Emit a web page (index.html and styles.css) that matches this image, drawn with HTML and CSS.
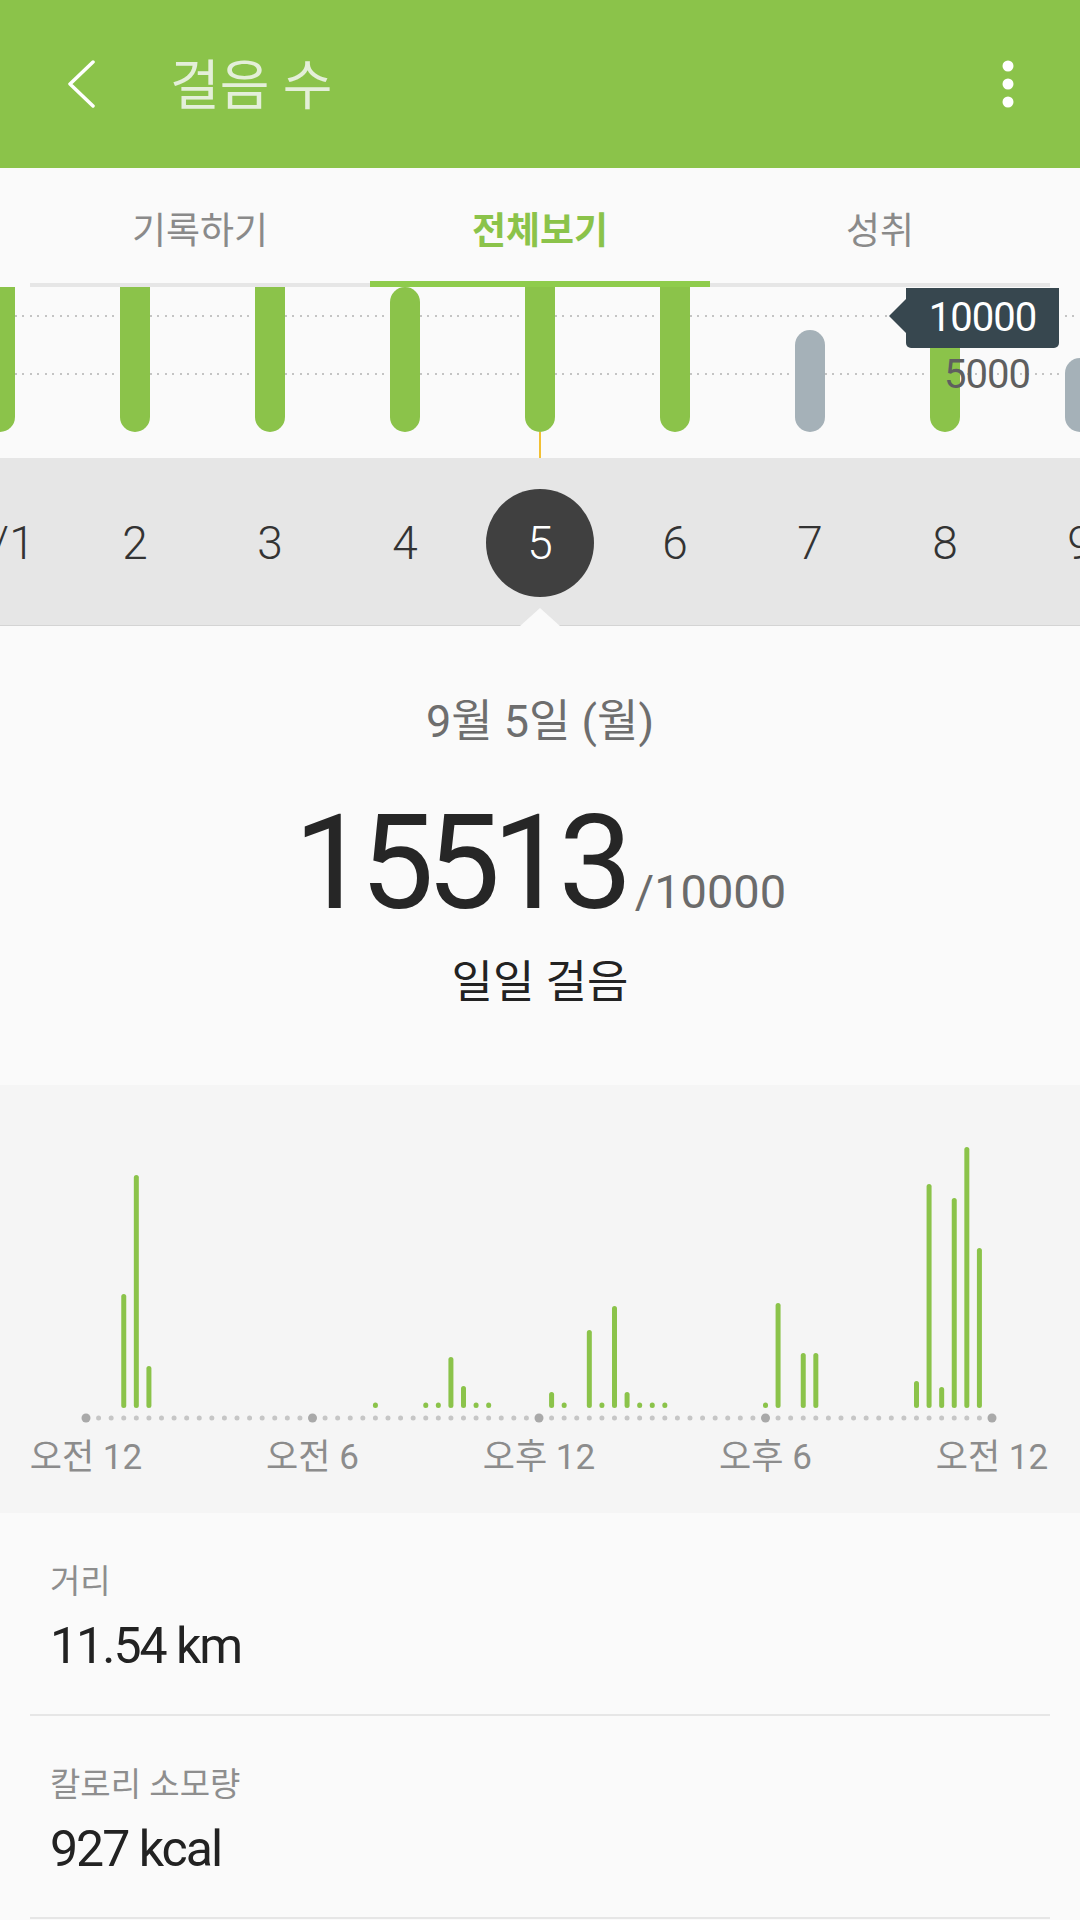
FILE: index.html
```html
<!DOCTYPE html>
<html lang="ko">
<head>
    <meta charset="UTF-8">
    <meta name="viewport" content="width=device-width, initial-scale=1.0">
    <title>걸음 수</title>
    <link rel="stylesheet" href="styles.css">
</head>
<body>
    <div class="screen">
        <header class="app-bar">
            <svg class="back-icon" viewBox="0 0 28 48">
                <polyline points="26,2 3,24 26,46" fill="none" stroke="#fff" stroke-width="3.5" stroke-linecap="round" stroke-linejoin="round"/>
            </svg>
            <h1 class="app-title">걸음 수</h1>
            <svg class="menu-icon" viewBox="0 0 12 48">
                <circle cx="6" cy="6" r="5.5" fill="#fff"/>
                <circle cx="6" cy="24" r="5.5" fill="#fff"/>
                <circle cx="6" cy="42" r="5.5" fill="#fff"/>
            </svg>
        </header>

        <nav class="tabs">
            <div class="tab">기록하기</div>
            <div class="tab active">전체보기</div>
            <div class="tab">성취</div>
        </nav>

        <section class="week-chart">
            <div class="grid-line goal"></div>
            <div class="grid-line half"></div>
            <div class="week-bars">
                <div class="day"><div class="bar capped" style="height:145px"></div></div>
                <div class="day"><div class="bar capped" style="height:145px"></div></div>
                <div class="day"><div class="bar capped" style="height:145px"></div></div>
                <div class="day"><div class="bar" style="height:145px"></div></div>
                <div class="day"><div class="bar capped" style="height:145px"></div></div>
                <div class="day"><div class="bar capped" style="height:145px"></div></div>
                <div class="day"><div class="bar missed" style="height:102px"></div></div>
                <div class="day"><div class="bar" style="height:125px"></div></div>
                <div class="day"><div class="bar missed" style="height:74px"></div></div>
            </div>
            <div class="today-stem"></div>
            <div class="goal-tag">10000</div>
            <div class="half-label">5000</div>
        </section>

        <div class="date-strip">
            <div class="dates-window">
                <div class="dates">
                    <span class="date">9/1</span>
                    <span class="date">2</span>
                    <span class="date">3</span>
                    <span class="date">4</span>
                    <span class="date"><span class="date-dot">5</span></span>
                    <span class="date">6</span>
                    <span class="date">7</span>
                    <span class="date">8</span>
                    <span class="date">9</span>
                </div>
            </div>
        </div>

        <section class="summary">
            <div class="summary-date">9월 5일 (월)</div>
            <div class="summary-steps"><span class="steps-count">15513</span><span class="steps-goal">/10000</span></div>
            <div class="summary-caption">일일 걸음</div>
        </section>

        <section class="hourly">
            <svg class="hourly-chart" width="1080" height="345" viewBox="0 0 1080 345">
                <line x1="86" y1="333" x2="992" y2="333" stroke="#c6c6c6" stroke-width="5" stroke-linecap="round" stroke-dasharray="0 12.583"/>
                <g fill="#a9a9a9">
                    <circle cx="86" cy="333" r="4.5"/>
                    <circle cx="312.5" cy="333" r="4.5"/>
                    <circle cx="539" cy="333" r="4.5"/>
                    <circle cx="765.5" cy="333" r="4.5"/>
                    <circle cx="992" cy="333" r="4.5"/>
                </g>
                <g stroke="#8bc34a" stroke-width="5" stroke-linecap="round">
                    <line x1="123.75" y1="211.5" x2="123.75" y2="320.5"/>
                    <line x1="136.33" y1="92.5" x2="136.33" y2="320.5"/>
                    <line x1="148.92" y1="283.5" x2="148.92" y2="320.5"/>
                    <line x1="375.42" y1="320" x2="375.42" y2="320.5"/>
                    <line x1="425.75" y1="320" x2="425.75" y2="320.5"/>
                    <line x1="438.33" y1="320" x2="438.33" y2="320.5"/>
                    <line x1="450.92" y1="274.5" x2="450.92" y2="320.5"/>
                    <line x1="463.5" y1="303.5" x2="463.5" y2="320.5"/>
                    <line x1="476.08" y1="320" x2="476.08" y2="320.5"/>
                    <line x1="488.67" y1="320" x2="488.67" y2="320.5"/>
                    <line x1="551.58" y1="309.5" x2="551.58" y2="320.5"/>
                    <line x1="564.17" y1="320" x2="564.17" y2="320.5"/>
                    <line x1="589.33" y1="247.5" x2="589.33" y2="320.5"/>
                    <line x1="601.92" y1="320" x2="601.92" y2="320.5"/>
                    <line x1="614.5" y1="223.5" x2="614.5" y2="320.5"/>
                    <line x1="627.08" y1="309.5" x2="627.08" y2="320.5"/>
                    <line x1="639.67" y1="320" x2="639.67" y2="320.5"/>
                    <line x1="652.25" y1="320" x2="652.25" y2="320.5"/>
                    <line x1="664.83" y1="320" x2="664.83" y2="320.5"/>
                    <line x1="765.5" y1="320" x2="765.5" y2="320.5"/>
                    <line x1="778.08" y1="220.5" x2="778.08" y2="320.5"/>
                    <line x1="803.25" y1="270.5" x2="803.25" y2="320.5"/>
                    <line x1="815.83" y1="270.5" x2="815.83" y2="320.5"/>
                    <line x1="916.5" y1="298.5" x2="916.5" y2="320.5"/>
                    <line x1="929.08" y1="101.5" x2="929.08" y2="320.5"/>
                    <line x1="941.67" y1="304.5" x2="941.67" y2="320.5"/>
                    <line x1="954.25" y1="115.5" x2="954.25" y2="320.5"/>
                    <line x1="966.83" y1="64.5" x2="966.83" y2="320.5"/>
                    <line x1="979.42" y1="165.5" x2="979.42" y2="320.5"/>
                </g>
            </svg>
            <div class="hourly-labels">
                <span>오전 12</span>
                <span>오전 6</span>
                <span>오후 12</span>
                <span>오후 6</span>
                <span>오전 12</span>
            </div>
        </section>

        <section class="stats">
            <div class="stat-row">
                <div class="stat-label">거리</div>
                <div class="stat-value">11.54 km</div>
            </div>
            <div class="stat-row">
                <div class="stat-label">칼로리 소모량</div>
                <div class="stat-value">927 kcal</div>
            </div>
        </section>
    </div>
</body>
</html>
```

FILE: styles.css
```css
body {
    margin: 0;
    background-color: #fafafa;
    font-family: Roboto, "Noto Sans CJK KR", sans-serif;
}
.screen {
    width: 1080px;
    height: 1920px;
    overflow: hidden;
    background-color: #fafafa;
}

/* top bar */
.app-bar {
    height: 168px;
    box-sizing: border-box;
    padding: 0 66px 0 67px;
    display: flex;
    align-items: center;
    background-color: #8bc34a;
}
.back-icon {
    width: 28px;
    height: 48px;
    flex-shrink: 0;
}
.app-title {
    flex: 1;
    margin: 6px 0 0 75px;
    font-size: 54px;
    font-weight: 400;
    line-height: 64px;
    color: #e4efd9;
}
.menu-icon {
    width: 12px;
    height: 48px;
    flex-shrink: 0;
}

/* tabs */
.tabs {
    display: flex;
    height: 115px;
    margin: 0 30px;
    border-bottom: 4px solid #e6e6e6;
}
.tab {
    flex: 1;
    position: relative;
    display: flex;
    align-items: center;
    justify-content: center;
    padding-top: 4px;
    font-size: 37px;
    color: #8a8a8a;
}
.tab.active {
    color: #8bc34a;
    font-weight: 700;
}
.tab.active::after {
    content: "";
    position: absolute;
    left: 0;
    right: 0;
    bottom: -4px;
    height: 6px;
    background-color: #8fcc4c;
}

/* weekly bars */
.week-chart {
    position: relative;
    height: 171px;
    overflow: hidden;
}
.grid-line {
    position: absolute;
    left: 0;
    right: 0;
    height: 2px;
    background-image: repeating-linear-gradient(to right, #c4c4c4 0 2px, transparent 2px 7.5px);
}
.grid-line.goal {
    top: 28px;
}
.grid-line.half {
    top: 86px;
}
.week-bars {
    position: relative;
    z-index: 1;
    display: flex;
    height: 145px;
    margin-left: -67.5px;
}
.day {
    flex: 0 0 135px;
    display: flex;
    align-items: flex-end;
    justify-content: center;
}
.bar {
    width: 30px;
    border-radius: 15px;
    background-color: #8bc34a;
}
.bar.capped {
    border-radius: 0 0 15px 15px;
}
.bar.missed {
    background-color: #a5b1b8;
}
.today-stem {
    position: absolute;
    left: 539px;
    top: 145px;
    width: 2px;
    height: 26px;
    background-color: #f2c033;
}
.goal-tag {
    position: absolute;
    z-index: 2;
    left: 906px;
    top: 1px;
    width: 153px;
    height: 60px;
    border-radius: 0 0 5px 5px;
    background-color: #37474f;
    color: #fff;
    font-size: 40px;
    line-height: 60px;
    letter-spacing: -1px;
    text-align: center;
}
.goal-tag::before {
    content: "";
    position: absolute;
    left: -17px;
    top: 11px;
    border-style: solid;
    border-width: 17px 17px 17px 0;
    border-color: transparent #37474f transparent transparent;
}
.half-label {
    position: absolute;
    z-index: 2;
    left: 944px;
    top: 68px;
    font-size: 40px;
    line-height: 40px;
    letter-spacing: -1px;
    color: #5f5f5f;
}

/* date picker strip */
.date-strip {
    position: relative;
    height: 167px;
    background-color: #e6e6e6;
    border-bottom: 1px solid #d4d4d4;
}
.date-strip::after {
    content: "";
    position: absolute;
    left: 520px;
    bottom: -1px;
    border-style: solid;
    border-width: 0 20px 18px 20px;
    border-color: transparent transparent #fafafa transparent;
}
.dates-window {
    height: 100%;
    overflow: hidden;
}
.dates {
    display: flex;
    height: 100%;
    margin-left: -67.5px;
}
.date {
    flex: 0 0 135px;
    display: flex;
    align-items: center;
    justify-content: center;
    padding-top: 2px;
    font-size: 46px;
    font-weight: 300;
    color: #333;
}
.date-dot {
    width: 108px;
    height: 108px;
    border-radius: 50%;
    display: flex;
    align-items: center;
    justify-content: center;
    background-color: #404040;
    color: #fff;
    font-weight: 300;
}

/* daily summary */
.summary {
    padding: 70px 0 76px;
    text-align: center;
}
.summary-date {
    font-size: 45px;
    line-height: 52px;
    color: #6e6e6e;
}
.summary-steps {
    margin-top: 49px;
    line-height: 1;
}
.steps-count {
    font-size: 132px;
    letter-spacing: -8px;
    color: #262626;
}
.steps-goal {
    margin-left: 10px;
    font-size: 47px;
    color: #6b6b6b;
}
.summary-caption {
    margin-top: 28px;
    font-size: 45px;
    line-height: 52px;
    color: #222;
}

/* hourly chart */
.hourly {
    padding-bottom: 27px;
    background-color: #f5f5f5;
    overflow: hidden;
}
.hourly-chart {
    display: block;
}
.hourly-labels {
    display: grid;
    grid-template-columns: repeat(5, 226.5px);
    margin-left: -27.25px;
    font-size: 35px;
    line-height: 56px;
    color: #8c8c8c;
    text-align: center;
}

/* stats list */
.stats {
    margin: 0 30px;
}
.stat-row {
    padding: 48px 20px 40px;
    border-bottom: 2px solid #e6e6e6;
}
.stat-label {
    font-size: 33px;
    line-height: 42px;
    color: #8e8e8e;
}
.stat-value {
    margin-top: 15px;
    font-size: 50px;
    line-height: 56px;
    letter-spacing: -2px;
    color: #222;
}
```
